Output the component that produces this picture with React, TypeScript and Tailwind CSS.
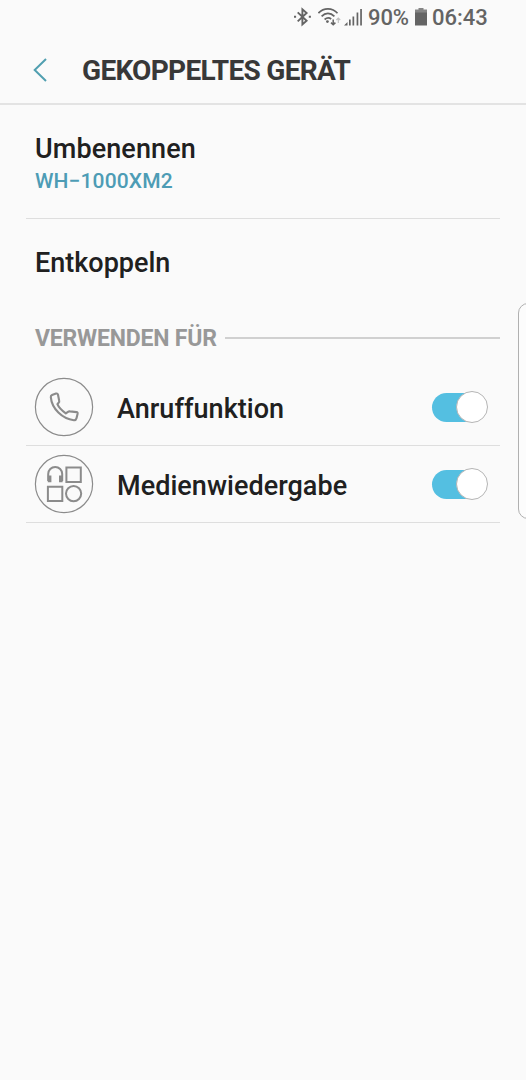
import { useState } from "react";
import type { ReactNode } from "react";

function StatusBar() {
  return (
    <div className="flex h-[36px] shrink-0 items-start pl-[293px] text-[#646464]">
      <svg className="mt-[7px] h-[20px] w-[19px] shrink-0" viewBox="0 0 19 20" fill="none" stroke="currentColor" strokeWidth="1.9">
        <path d="M4.7 5.4 L13.6 13.7 L9.4 17.4 V2.4 L13.6 6 L4.7 14.4" />
        <path d="M1 9.7h2.1M15.8 9.7h2.1" strokeWidth="2.1" />
      </svg>
      <svg className="ml-[6px] mt-[7px] h-[20px] w-[23px] shrink-0" viewBox="0 0 23 20" fill="none" stroke="currentColor" strokeWidth="1.7">
        <path d="M0.4 6.2C5.6 0.3 14.3 0.3 19.5 6.2M3.6 9.3C7.4 5.3 12.5 5.3 16.4 9.3M6.6 12.5C9 10.3 11.2 10.3 13.2 12" />
        <circle cx="9.4" cy="14.6" r="1.4" fill="currentColor" stroke="none" />
        <path d="M15.2 12.5v5M13 15.6l2.2 2.2 2.2-2.2" strokeWidth="1.5" />
        <path d="M20.3 16v-5M18.4 13l1.9-2 1.9 2" strokeWidth="1.1" opacity=".4" />
      </svg>
      <svg className="ml-[3px] mt-[8px] h-[18px] w-[19px] shrink-0" viewBox="0 0 19 18" fill="currentColor">
        <path d="M0 17.5L3.5 14V17.5ZM5 11.5h1.7v6H5ZM8.5 8.5h1.7v9H8.5ZM12.6 4.5h1.7v13h-1.7ZM16.2 1h1.7v16.5h-1.7Z" />
      </svg>
      <span className="ml-[5px] mt-[5px] w-[42px] whitespace-nowrap text-[22px] font-medium leading-[26px] tracking-[-0.1px]">90%</span>
      <svg className="ml-[5px] mt-[8px] h-[18px] w-[13px] shrink-0" viewBox="0 0 13 18">
        <path d="M3.5 0h5v1.5H12V5H0V1.5h3.5Z" fill="#858585" />
        <path d="M0 4.5h12V17.5H0Z" fill="#646464" />
      </svg>
      <span className="ml-[4px] mt-[5px] whitespace-nowrap text-[22px] font-medium leading-[26px]">06:43</span>
    </div>
  );
}

function PhoneIcon() {
  return (
    <svg className="h-[60px] w-[60px] shrink-0" viewBox="0 0 60 60" fill="none" stroke="#8b8b8b">
      <circle cx="30" cy="30" r="28.6" strokeWidth="1.2" />
      <path d="M18 18 L22 16.6 Q23.6 16.2 24 17.8 L25.2 23.8 Q25.5 25 24.6 25.8 L23.4 27.2 Q25.2 31.7 31.8 36.4 L34 34.8 Q34.8 34.2 36 34.4 L42.5 35.1 Q43.9 35.3 43.6 36.7 L42.5 41.3 Q42 43.4 39.9 43.2 C28.3 42 17.8 31.8 16.8 20.2 Q16.7 18.5 18 18Z" strokeWidth="2.1" strokeLinejoin="round" />
    </svg>
  );
}

function MediaIcon() {
  return (
    <svg className="h-[60px] w-[60px] shrink-0" viewBox="0 0 60 60" fill="none" stroke="#8b8b8b">
      <circle cx="30" cy="30" r="28.6" strokeWidth="1.2" />
      <path d="M14.2 27V20a7 7 0 0 1 14 0v7" strokeWidth="2" />
      <path d="M15.6 21.6v6.6M26.8 21.6v6.6" strokeWidth="3.6" />
      <path d="M32.4 13.6h14.4V28H32.4ZM13.9 32.8H28.3v14.3H13.9Z" strokeWidth="2" />
      <circle cx="39.6" cy="39.6" r="7.6" strokeWidth="2" />
    </svg>
  );
}

function Toggle({ label }: { label: string }) {
  const [on, setOn] = useState(true);
  return (
    <button
      type="button"
      role="switch"
      aria-checked={on}
      aria-label={label}
      onClick={() => setOn(!on)}
      className="mr-[12px] flex h-[32px] w-[56px] shrink-0 items-center"
    >
      <span className={`flex h-[29px] w-[51px] items-center rounded-full ${on ? "justify-end bg-[#54bfe1]" : "justify-start bg-[#b8b8b8]"}`}>
        <span className={`h-[32px] w-[32px] shrink-0 rounded-full border border-[#b5b5b5] bg-white ${on ? "-mr-[5px]" : "-ml-[1px]"}`} />
      </span>
    </button>
  );
}

function ProfileRow({ icon, label }: { icon: ReactNode; label: string }) {
  return (
    <div className="ml-[26px] mr-[26px] flex h-[77px] items-center border-b border-[#dedede] pl-[8px]">
      {icon}
      <span className="ml-[23px] mt-[3px] flex-1 whitespace-nowrap text-[27px] font-medium leading-[32px] tracking-[0.04px] text-[#202020]">{label}</span>
      <Toggle label={label} />
    </div>
  );
}

export default function App() {
  return (
    <div className="relative flex h-[1080px] w-[526px] flex-col overflow-hidden bg-[#fafafa] font-[Roboto,sans-serif]">
      <StatusBar />
      <header className="flex h-[69px] shrink-0 items-center border-b-2 border-[#e3e3e3] pl-[33px]">
        <svg className="mt-[1px] h-[24px] w-[15px] shrink-0" viewBox="0 0 15 24" fill="none" stroke="#509fb0" strokeWidth="2">
          <path d="M13 1L1.7 12L13 23" />
        </svg>
        <h1 className="ml-[34px] mt-[3px] whitespace-nowrap text-[28px] font-bold leading-[34px] tracking-[-0.7px] text-[#383838]">GEKOPPELTES GERÄT</h1>
      </header>
      <main>
        <section className="mx-[26px] h-[114px] border-b border-[#dedede] pl-[9px] pt-[28px]">
          <h2 className="text-[27px] font-medium leading-[32px] tracking-[0.1px] text-[#202020]">Umbenennen</h2>
          <p className="mt-[4px] text-[21px] font-medium leading-[25px] tracking-[0.12px] text-[#4d9cb5]">WH−1000XM2</p>
        </section>
        <section className="flex h-[86px] items-center pl-[35px] pt-[2px]">
          <h2 className="text-[27px] font-medium leading-[32px] text-[#202020]">Entkoppeln</h2>
        </section>
        <div className="mr-[26px] flex h-[64px] items-center pl-[35px]">
          <h3 className="mt-[4px] w-[190px] whitespace-nowrap text-[23px] font-bold leading-[28px] tracking-[-0.2px] text-[#989898]">VERWENDEN FÜR</h3>
          <div className="mt-[1px] h-[2px] flex-1 bg-[#d0d0d0]" />
        </div>
        <ProfileRow icon={<PhoneIcon />} label="Anruffunktion" />
        <ProfileRow icon={<MediaIcon />} label="Medienwiedergabe" />
      </main>
      <div className="absolute left-[518px] top-[303px] h-[216px] w-[20px] rounded-[10px] border border-[#b0b0b0] bg-[#fcfcfc]" />
    </div>
  );
}
